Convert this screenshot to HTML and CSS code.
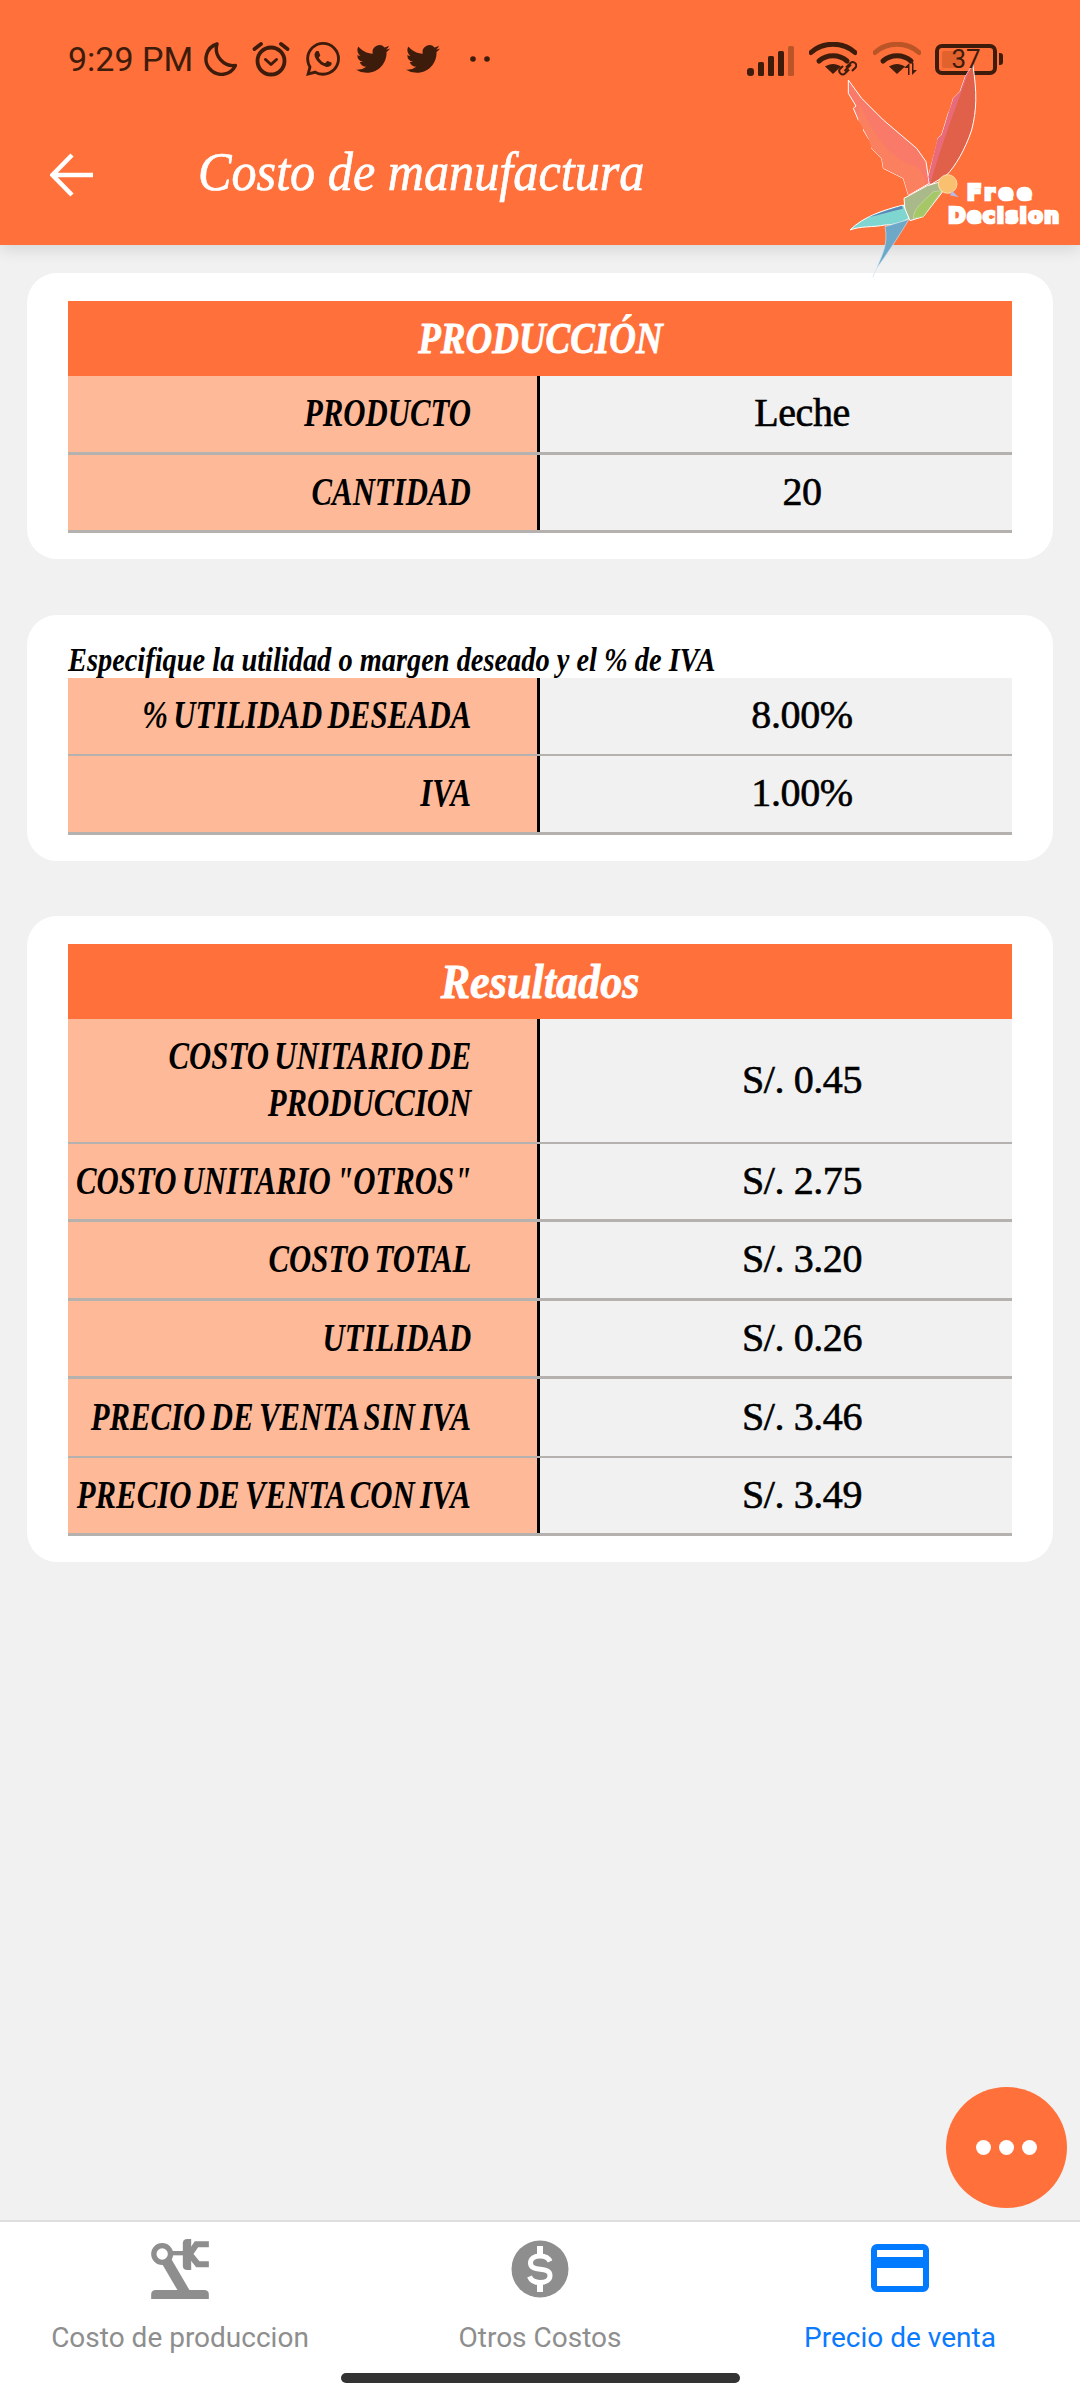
FILE: index.html
```html
<!DOCTYPE html>
<html lang="es">
<head>
  <meta charset="UTF-8">
  <title>Costo de manufactura</title>
  <link rel="stylesheet" href="styles.css">
</head>
<body>
  <div class="app">
    <header class="top-bar">
      <div class="status-bar">
        <span class="time">9:29 PM</span>
        <svg class="st-moon" viewBox="0 0 34 34"><path d="M14 2 A15.500 15.500 0 1 0 32.500 23.500 A17 17 0 0 1 14 2 Z" fill="none" stroke="#3e1c0c" stroke-width="3.400" stroke-linejoin="round"/></svg>
        <svg class="st-alarm" viewBox="0 0 38 36"><circle cx="19" cy="20" r="13.500" fill="none" stroke="#3e1c0c" stroke-width="3.800"/><path d="M13.500 18.500 19 23.500 24.500 18.500" fill="none" stroke="#3e1c0c" stroke-width="3" stroke-linecap="round" stroke-linejoin="round"/><path d="M2.500 8 9 3M35.500 8 29 3" fill="none" stroke="#3e1c0c" stroke-width="3.800" stroke-linecap="round"/></svg>
        <svg class="st-wa" viewBox="0 0 24 24"><path fill="#3e1c0c" d="M17.472 14.382c-.297-.149-1.758-.867-2.03-.967-.273-.099-.471-.148-.67.15-.197.297-.767.966-.94 1.164-.173.199-.347.223-.644.075-.297-.15-1.255-.463-2.39-1.475-.883-.788-1.48-1.761-1.653-2.059-.173-.297-.018-.458.13-.606.134-.133.298-.347.446-.52.149-.174.198-.298.298-.497.099-.198.05-.371-.025-.52-.075-.149-.669-1.612-.916-2.207-.242-.579-.487-.5-.669-.51-.173-.008-.371-.01-.57-.01-.198 0-.52.074-.792.372-.272.297-1.04 1.016-1.04 2.479 0 1.462 1.065 2.875 1.213 3.074.149.198 2.096 3.2 5.077 4.487.709.306 1.262.489 1.694.625.712.227 1.36.195 1.871.118.571-.085 1.758-.719 2.006-1.413.248-.694.248-1.289.173-1.413-.074-.124-.272-.198-.57-.347m-5.421 7.403h-.004a9.87 9.87 0 01-5.031-1.378l-.361-.214-3.741.982.998-3.648-.235-.374a9.86 9.86 0 01-1.51-5.26c.001-5.45 4.436-9.884 9.888-9.884 2.64 0 5.122 1.03 6.988 2.898a9.825 9.825 0 012.893 6.994c-.003 5.45-4.437 9.884-9.885 9.884m8.413-18.297A11.815 11.815 0 0012.05 0C5.495 0 .16 5.335.157 11.892c0 2.096.547 4.142 1.588 5.945L.057 24l6.305-1.654a11.882 11.882 0 005.683 1.448h.005c6.554 0 11.89-5.335 11.893-11.893a11.821 11.821 0 00-3.48-8.413z"/></svg>
        <svg class="st-tw" viewBox="0 0 24 24"><path fill="#3e1c0c" d="M23.953 4.57a10 10 0 01-2.825.775 4.958 4.958 0 002.163-2.723c-.951.555-2.005.959-3.127 1.184a4.92 4.92 0 00-8.384 4.482C7.69 8.095 4.067 6.13 1.64 3.162a4.822 4.822 0 00-.666 2.475c0 1.71.87 3.213 2.188 4.096a4.904 4.904 0 01-2.228-.616v.06a4.923 4.923 0 003.946 4.827 4.996 4.996 0 01-2.212.085 4.936 4.936 0 004.604 3.417 9.867 9.867 0 01-6.102 2.105c-.39 0-.779-.023-1.17-.067a13.995 13.995 0 007.557 2.209c9.053 0 13.998-7.496 13.998-13.985 0-.21 0-.42-.015-.63A9.935 9.935 0 0024 4.59z"/></svg>
        <svg class="st-tw" viewBox="0 0 24 24"><path fill="#3e1c0c" d="M23.953 4.57a10 10 0 01-2.825.775 4.958 4.958 0 002.163-2.723c-.951.555-2.005.959-3.127 1.184a4.92 4.92 0 00-8.384 4.482C7.69 8.095 4.067 6.13 1.64 3.162a4.822 4.822 0 00-.666 2.475c0 1.71.87 3.213 2.188 4.096a4.904 4.904 0 01-2.228-.616v.06a4.923 4.923 0 003.946 4.827 4.996 4.996 0 01-2.212.085 4.936 4.936 0 004.604 3.417 9.867 9.867 0 01-6.102 2.105c-.39 0-.779-.023-1.17-.067a13.995 13.995 0 007.557 2.209c9.053 0 13.998-7.496 13.998-13.985 0-.21 0-.42-.015-.63A9.935 9.935 0 0024 4.59z"/></svg>
        <svg class="st-dots" viewBox="0 0 20 6"><circle cx="3" cy="3" r="2.800" fill="#3e1c0c"/><circle cx="17" cy="3" r="2.800" fill="#3e1c0c"/></svg>
        <span class="status-spacer"></span>
        <svg class="st-signal" viewBox="0 0 48 30"><g fill="#3e1c0c"><rect x="0" y="22" width="7" height="8" rx="3"/><rect x="11" y="16" width="6" height="14" rx="1.500"/><rect x="21" y="10" width="6" height="20" rx="1.500"/><rect x="31" y="5" width="6" height="25" rx="1.500"/></g><rect x="41" y="0" width="6" height="30" rx="1.500" fill="#bb5528"/></svg>
        <svg class="st-wifi" viewBox="0 0 48 34"><g fill="none" stroke="#3e1c0c" stroke-width="5" stroke-linecap="round"><path d="M2 10.500C14-.5 34-.5 46 10.500"/><path d="M10 19C18 12 30 12 38 19"/></g><path d="M24 32 16 24.500C21 21 27 21 32 24.500Z" fill="#3e1c0c"/><path d="M37 25.500 41.500 21a3.400 3.400 0 0 1 4.800 4.800L43 29M40 27.500 36 31.500a3.400 3.400 0 0 1-4.800-4.800L34 24M35.500 29 42 22.500" fill="none" stroke="#3e1c0c" stroke-width="2"/></svg>
        <svg class="st-wifi st-wifi-b" viewBox="0 0 48 34"><g fill="none" stroke="#bb5528" stroke-width="5" stroke-linecap="round"><path d="M2 10.500C14-.5 34-.5 46 10.500"/><path d="M10 19C18 12 30 12 38 19" stroke="#3e1c0c"/></g><path d="M24 32 16 24.500C21 21 27 21 32 24.500Z" fill="#3e1c0c"/><path d="M35 33V26L31 26 36.500 21V33ZM39 21V33L44 28H40.500V21Z" fill="#3e1c0c"/></svg>
        <span class="battery"><span class="battery-fill"></span><span class="battery-num">37</span></span>
        <span class="battery-nub"></span>
      </div>
      <div class="title-row">
        <svg class="back" viewBox="0 0 44 44"><path d="M43 22H3M22 2 2.500 22 22 42" fill="none" stroke="#fff" stroke-width="4.500"/></svg>
        <h1>Costo de manufactura</h1>
      </div>
    </header>

    <svg class="logo" viewBox="0 -42 720 672">
      <g stroke="#fff" stroke-width="3" stroke-linejoin="round">
        <path d="M25 30 65 85 130 150 230 235 258 275 268 340 205 375 190 325 130 295 125 265 95 235 100 225 85 205 70 180 75 170 55 150 40 115 48 108 25 70Z" fill="#f97a68"/>
        <path d="M60 105C100 190 150 270 230 290 250 305 255 325 255 345L205 375 190 325 130 295 125 265 95 235 85 205 55 150Z" fill="#fb8060" stroke="none"/>
        <path d="M398 -18C412 70 410 120 395 180 375 240 345 290 320 315L270 345 265 320C280 260 295 215 293 205L305 195 325 130 330 120 340 85 360 65 376 20Z" fill="#e0604a"/>
        <path d="M394 -16 376 20 360 65 340 85 325 130 305 195 293 205 265 320 270 345C300 240 340 130 394 -16Z" fill="#e96a78" stroke="none"/>
        <path d="M192 385 262 347 302 335 308 365 250 440 210 452 195 420Z" fill="#a9b98a"/>
        <path d="M220 445C220 415 250 395 280 365L306 362 250 440Z" fill="#a5c768" stroke="#dbe8b0" stroke-width="1.500"/>
        <path d="M190 405C130 420 70 440 30 480 60 468 100 472 135 465 165 465 190 455 207 445Z" fill="#7fd6d0"/>
        <path d="M186 407C150 418 115 428 85 442 120 434 155 424 188 416Z" fill="#5a86b8" stroke="none"/>
        <path d="M135 470 207 448C170 510 135 560 110 595 128 550 145 520 135 470Z" fill="#6ea8c8" stroke="#cfe6f0" stroke-width="2"/>
        <path d="M110 595 98 622" fill="none" stroke="#cfe6f0" stroke-width="2.500"/>
        <circle cx="323" cy="342" r="28" fill="#f9c070" stroke="#fff3c8" stroke-width="2"/>
        <path d="M336 362 356 382 330 376Z" fill="#b4bce6" stroke="none"/>
      </g>
      <text class="logo-free" x="380" y="390">Free</text>
      <text class="logo-decision" x="324" y="460">Decision</text>
    </svg>

    <main class="content">
      <section class="card">
        <h2 class="table-head"><span class="squeeze head-caps">PRODUCCIÓN</span></h2>
        <div class="row"><div class="label"><span class="squeeze">PRODUCTO</span></div><div class="value">Leche</div></div>
        <div class="row"><div class="label"><span class="squeeze">CANTIDAD</span></div><div class="value">20</div></div>
      </section>

      <section class="card card-hint">
        <p class="hint"><span class="squeeze">Especifique la utilidad o margen deseado y el % de IVA</span></p>
        <div class="row row-thin"><div class="label"><span class="squeeze">% UTILIDAD DESEADA</span></div><div class="value">8.00%</div></div>
        <div class="row"><div class="label"><span class="squeeze">IVA</span></div><div class="value">1.00%</div></div>
      </section>

      <section class="card">
        <h2 class="table-head"><span class="squeeze head-mixed">Resultados</span></h2>
        <div class="row row-tall row-thin"><div class="label"><span class="squeeze">COSTO UNITARIO DE<br>PRODUCCION</span></div><div class="value">S/. 0.45</div></div>
        <div class="row"><div class="label"><span class="squeeze">COSTO UNITARIO "OTROS"</span></div><div class="value">S/. 2.75</div></div>
        <div class="row"><div class="label"><span class="squeeze">COSTO TOTAL</span></div><div class="value">S/. 3.20</div></div>
        <div class="row"><div class="label"><span class="squeeze">UTILIDAD</span></div><div class="value">S/. 0.26</div></div>
        <div class="row row-thin"><div class="label"><span class="squeeze">PRECIO DE VENTA SIN IVA</span></div><div class="value">S/. 3.46</div></div>
        <div class="row"><div class="label"><span class="squeeze">PRECIO DE VENTA CON IVA</span></div><div class="value">S/. 3.49</div></div>
      </section>
    </main>

    <button class="fab"><span></span><span></span><span></span></button>

    <nav class="bottom-nav">
      <div class="tabs">
        <div class="tab">
          <svg class="tab-icon" viewBox="95 55 173 180">
            <g fill="#8e8e8e">
              <path d="M95 235V222Q95 208 109 208H254Q268 208 268 222V235Z"/>
              <path d="M128 130 155 114 212 212H176Z"/>
              <rect x="155" y="91" width="42" height="13"/>
              <path d="M190 68Q190 55 204 55H215V148H204Q190 148 190 135Z"/>
              <path d="M215 62H268V80H236L222 100 240 122H268V140H230L208 112V88L226 62Z"/>
            </g>
            <circle cx="128" cy="100" r="25" fill="#fff" stroke="#8e8e8e" stroke-width="16"/>
          </svg>
          <span>Costo de produccion</span>
        </div>
        <div class="tab">
          <svg class="tab-icon" viewBox="0 0 58 58">
            <circle cx="29" cy="29" r="28.500" fill="#8e8e8e"/>
            <path d="M39 21.500C37.500 17.500 33.500 16 29 16 23.500 16 19.500 18.500 19.500 23 19.500 33 39 25.500 39 35.500 39 40 34.500 42.500 29 42.500 24 42.500 20 40.500 18.500 36.500" fill="none" stroke="#fff" stroke-width="5"/>
            <path d="M29 6V16M29 42V52" stroke="#fff" stroke-width="6"/>
          </svg>
          <span>Otros Costos</span>
        </div>
        <div class="tab tab-active">
          <svg class="tab-icon" viewBox="0 0 58 60">
            <rect x="3" y="8" width="52" height="42" rx="3" fill="none" stroke="#007aff" stroke-width="6"/>
            <rect x="3" y="18" width="52" height="11" fill="#007aff"/>
          </svg>
          <span>Precio de venta</span>
        </div>
      </div>
      <div class="home-bar"></div>
    </nav>
  </div>
</body>
</html>
```

FILE: styles.css
```css
* {
  box-sizing: border-box;
}

body {
  margin: 0;
  background: #f1f1f1;
  font-family: "Liberation Serif", serif;
}

.app {
  position: relative;
  width: 1080px;
  height: 2400px;
  display: flex;
  flex-direction: column;
  overflow: hidden;
}

/* Top bar */
.top-bar {
  height: 245px;
  flex: none;
  background: #ff703a;
  box-shadow: 0 4px 16px rgba(0,0,0,0.12);
  padding: 42px 0 0 68px;
  position: relative;
}

.status-bar {
  display: flex;
  align-items: center;
  height: 34px;
  padding-right: 77px;
  color: #3e1c0c;
}

.status-bar svg {
  flex: none;
}

.time {
  font-family: Roboto, sans-serif;
  font-size: 34px;
  width: 135px;
  white-space: nowrap;
}

.st-moon { width: 34px; height: 34px; }
.st-alarm { width: 38px; height: 36px; margin-left: 15px; }
.st-wa { width: 34px; height: 34px; margin-left: 16px; }
.st-tw { width: 34px; height: 34px; margin-left: 16px; }
.st-dots { width: 20px; height: 6px; margin-left: 30px; }
.status-spacer { flex: 1; }
.st-signal { width: 48px; height: 30px; margin-top: 4px; }
.st-wifi { width: 48px; height: 34px; margin-left: 14px; }
.st-wifi-b { margin-left: 16px; }

.battery {
  position: relative;
  width: 62px;
  height: 31px;
  margin-left: 14px;
  border: 4px solid #3e1c0c;
  border-radius: 7px;
}

.battery-fill {
  position: absolute;
  left: 3px;
  top: 3px;
  bottom: 3px;
  width: 20px;
  border-radius: 2px;
  background: #e2622e;
}

.battery-num {
  position: absolute;
  left: 0;
  right: 0;
  top: -4px;
  z-index: 3;
  text-align: center;
  font-family: Roboto, sans-serif;
  font-size: 26px;
  line-height: 31px;
  color: #3e1c0c;
}

.battery-nub {
  width: 4px;
  height: 12px;
  margin-left: 2px;
  border-radius: 0 3px 3px 0;
  background: #3e1c0c;
}

.title-row {
  display: flex;
  align-items: center;
  margin: 65px 0 0 -18px;
}

.back {
  width: 44px;
  height: 44px;
  flex: none;
  margin-top: 6px;
}

h1 {
  margin: 0 0 0 104px;
  font-size: 54px;
  font-weight: normal;
  font-style: italic;
  color: #fff;
  white-space: nowrap;
  -webkit-text-stroke: 0.7px #fff;
  transform: scaleX(0.93);
  transform-origin: left center;
}

/* Logo over the bar */
.logo {
  position: absolute;
  left: 840px;
  top: 56px;
  width: 240px;
  height: 224px;
  z-index: 2;
}

.logo text {
  font-family: "DejaVu Sans", sans-serif;
  font-weight: bold;
  fill: #fff;
  stroke: #fff;
  stroke-width: 8px;
}

.logo-free {
  font-size: 66px;
  letter-spacing: 11px;
}

.logo-decision {
  font-size: 64px;
  letter-spacing: 4px;
}

/* Cards */
.content {
  flex: 1;
  padding: 28px 27px 0;
  display: flex;
  flex-direction: column;
  gap: 55.5px;
}

.card {
  background: #fff;
  border-radius: 30px;
  padding: 28px 41px 26px;
}

.card-hint {
  padding-top: 0;
}

.table-head {
  height: 75px;
  margin: 0;
  background: #ff703a;
  color: #fff;
  display: flex;
  align-items: center;
  justify-content: center;
  font-style: italic;
  font-weight: bold;
  -webkit-text-stroke: 0.8px #fff;
}

.squeeze {
  display: inline-block;
  flex: none;
  white-space: nowrap;
  transform: scaleX(0.8);
}

.head-caps {
  font-size: 44px;
  transform: scaleX(0.84);
}

.head-mixed {
  font-size: 48px;
  transform: scaleX(0.92);
}

.hint {
  height: 63px;
  margin: 0;
  display: flex;
  align-items: flex-end;
  padding-bottom: 1px;
  font-size: 33px;
  line-height: 34px;
  font-style: italic;
  font-weight: bold;
  color: #000;
}

.hint .squeeze {
  transform: scaleX(0.86);
  transform-origin: left center;
}

.row {
  display: flex;
  height: 78.5px;
  border-bottom: 3px solid #b4b1ae;
}

.row-tall {
  height: 124.5px;
}

.row-thin {
  border-bottom-width: 2px;
}

.label {
  width: 472px;
  flex: none;
  background: #feba98;
  border-right: 3px solid #000;
  padding: 0 66px 2px 0;
  display: flex;
  align-items: center;
  justify-content: flex-end;
  text-align: right;
  font-size: 40px;
  line-height: 47px;
  font-style: italic;
  font-weight: bold;
  word-spacing: -3px;
  color: #000;
}

.label .squeeze {
  transform: scaleX(0.77);
  transform-origin: right center;
}

.value {
  flex: 1;
  background: #f1f1f1;
  padding: 0 0 2px 52px;
  display: flex;
  align-items: center;
  justify-content: center;
  font-size: 40px;
  letter-spacing: -0.4px;
  color: #000;
  -webkit-text-stroke: 0.6px #000;
}

/* Floating button */
.fab {
  position: absolute;
  left: 946px;
  top: 2087px;
  width: 121px;
  height: 121px;
  border: none;
  border-radius: 50%;
  background: #ff703a;
  display: flex;
  align-items: center;
  justify-content: center;
  gap: 8px;
  padding: 0;
}

.fab span {
  width: 15px;
  height: 15px;
  border-radius: 50%;
  background: #fff;
}

/* Bottom nav */
.bottom-nav {
  height: 180px;
  flex: none;
  background: #fff;
  border-top: 2px solid #dedede;
}

.tabs {
  display: grid;
  grid-template-columns: repeat(3, 360px);
  padding-top: 17px;
}

.tab {
  display: flex;
  flex-direction: column;
  align-items: center;
  font-family: Roboto, sans-serif;
  font-size: 28px;
  color: #8e8e8e;
}

.tab-icon {
  width: 58px;
  height: 60px;
}

.tab span {
  margin-top: 21px;
  line-height: 36px;
}

.tab-active {
  color: #0a7aff;
}

.home-bar {
  width: 399px;
  height: 10px;
  margin: 17px auto 0;
  border-radius: 5px;
  background: #333;
}
```
